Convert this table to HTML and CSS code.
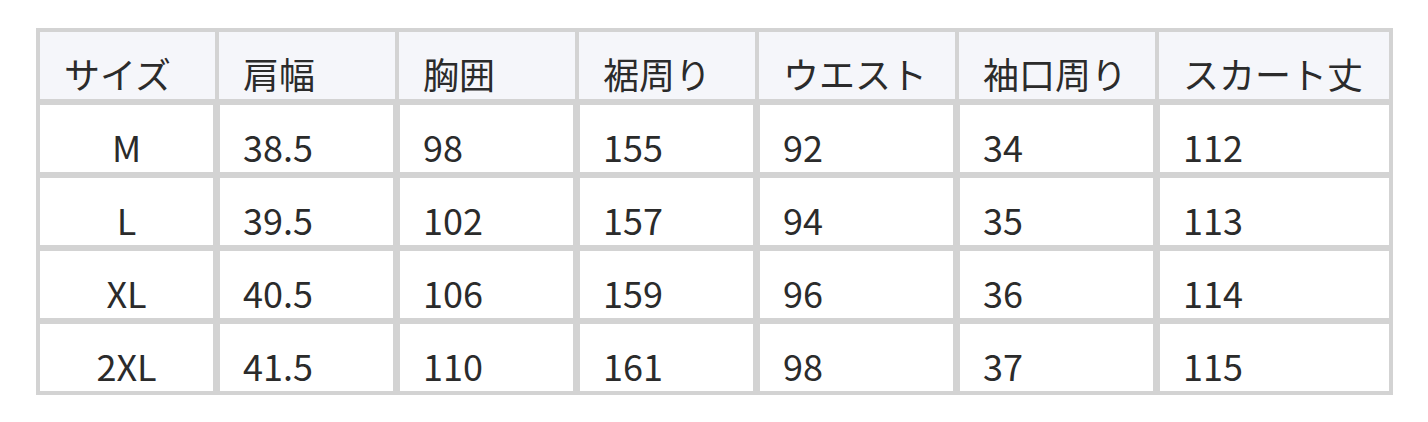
FILE: index.html
```html
<!DOCTYPE html>
<html lang="ja">
<head>
<meta charset="utf-8">
<title>サイズ表</title>
<link rel="stylesheet" href="styles.css">
</head>
<body>
<div class="page">
  <div class="size-table">
    <div class="row head">
      <div class="cell">サイズ</div>
      <div class="cell">肩幅</div>
      <div class="cell">胸囲</div>
      <div class="cell">裾周り</div>
      <div class="cell">ウエスト</div>
      <div class="cell">袖口周り</div>
      <div class="cell">スカート丈</div>
    </div>
    <div class="row body">
      <div class="cell size">M</div>
      <div class="cell">38.5</div>
      <div class="cell">98</div>
      <div class="cell">155</div>
      <div class="cell">92</div>
      <div class="cell">34</div>
      <div class="cell">112</div>
    </div>
    <div class="row body">
      <div class="cell size">L</div>
      <div class="cell">39.5</div>
      <div class="cell">102</div>
      <div class="cell">157</div>
      <div class="cell">94</div>
      <div class="cell">35</div>
      <div class="cell">113</div>
    </div>
    <div class="row body">
      <div class="cell size">XL</div>
      <div class="cell">40.5</div>
      <div class="cell">106</div>
      <div class="cell">159</div>
      <div class="cell">96</div>
      <div class="cell">36</div>
      <div class="cell">114</div>
    </div>
    <div class="row body">
      <div class="cell size">2XL</div>
      <div class="cell">41.5</div>
      <div class="cell">110</div>
      <div class="cell">161</div>
      <div class="cell">98</div>
      <div class="cell">37</div>
      <div class="cell">115</div>
    </div>
  </div>
</div>
</body>
</html>
```

FILE: styles.css
```css
html, body {
  margin: 0;
  padding: 0;
  background: #ffffff;
}

.page {
  padding: 28px 0 0 36px;
  font-family: "Noto Sans CJK JP", "Noto Sans", sans-serif;
  font-size: 36px;
  color: #2b2b2b;
}

.size-table {
  display: flex;
  flex-direction: column;
  gap: 6.5px;
  width: max-content;
  padding: 4px;
  background: #d3d3d3;
}

.row {
  display: grid;
}

.row.head {
  grid-template-columns: 175px 176px 176px 176px 196px 196px 230px;
  column-gap: 4px;
  height: 67px;
  margin-bottom: -0.5px;
}

.row.body {
  grid-template-columns: 173px 173px 173px 173px 193px 193px 229px;
  column-gap: 7px;
  height: 66.6px;
}

.cell {
  display: flex;
  align-items: flex-end;
  white-space: nowrap;
}

.head .cell {
  background: #f5f6fa;
  padding-left: 24px;
}

.body .cell {
  background: #ffffff;
  padding-left: 23px;
}

.body .cell.size {
  justify-content: center;
  padding-left: 0;
}
```
